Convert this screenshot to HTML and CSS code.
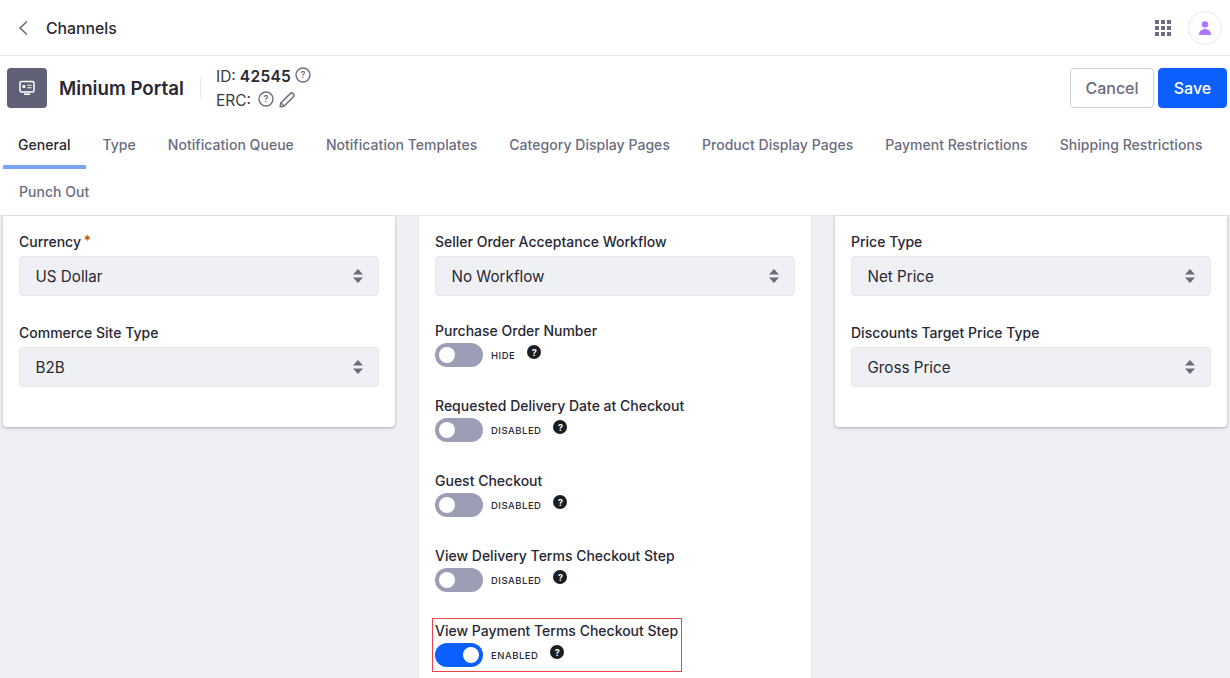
FILE: index.html
```html
<!DOCTYPE html>
<html lang="en">
<head>
<meta charset="utf-8">
<title>Channels</title>
<link rel="stylesheet" href="styles.css">
</head>
<body>
<header class="topbar">
  <svg class="back" width="12" height="16" viewBox="0 0 12 16"><path d="M10 1.5 3 8l7 6.5" fill="none" stroke="#6b6c7e" stroke-width="1.6"/></svg>
  <span class="topbar-title">Channels</span>
  <span class="spacer"></span>
  <svg class="apps" width="16" height="16" viewBox="0 0 16 16" fill="#6b6c7e">
    <rect x="0" y="0" width="4" height="4"/><rect x="6" y="0" width="4" height="4"/><rect x="12" y="0" width="4" height="4"/>
    <rect x="0" y="6" width="4" height="4"/><rect x="6" y="6" width="4" height="4"/><rect x="12" y="6" width="4" height="4"/>
    <rect x="0" y="12" width="4" height="4"/><rect x="6" y="12" width="4" height="4"/><rect x="12" y="12" width="4" height="4"/>
  </svg>
  <span class="avatar">
    <svg width="14" height="14" viewBox="0 0 14 14" fill="#af78ff"><circle cx="7" cy="3.4" r="3.2"/><path d="M1 14c0-3.8 2.4-6 6-6s6 2.2 6 6z"/></svg>
  </span>
</header>

<section class="entity">
  <span class="entity-icon">
    <svg width="16" height="16" viewBox="0 0 16 16"><rect x="1" y="1.6" width="14" height="10.4" rx="1.5" fill="none" stroke="#fff" stroke-width="1.5"/><rect x="3.4" y="5" width="3" height="3" rx="1" fill="#fff"/><path d="M8.4 5.2h4.2M8.4 7.8h4.2" stroke="#fff" stroke-width="1.1"/><rect x="5" y="13.4" width="6" height="1.6" fill="#fff"/></svg>
  </span>
  <h1 class="entity-name">Minium Portal</h1>
  <span class="divider"></span>
  <div class="entity-meta">
    <div class="meta-line"><span>ID:</span><b class="meta-id">42545</b>
      <svg class="help" width="16" height="16" viewBox="0 0 16 16"><circle cx="8" cy="8" r="7" fill="none" stroke="#6b6c7e" stroke-width="1.4"/><text x="8" y="11" text-anchor="middle" class="help-mark">?</text></svg>
    </div>
    <div class="meta-line"><span>ERC:</span>
      <svg class="help help-erc" width="16" height="16" viewBox="0 0 16 16"><circle cx="8" cy="8" r="7" fill="none" stroke="#6b6c7e" stroke-width="1.4"/><text x="8" y="11" text-anchor="middle" class="help-mark">?</text></svg>
      <svg class="pencil" width="16" height="16" viewBox="0 0 16 16"><path d="M1.2 14.8 1.8 11 11.5 1.4a1.6 1.6 0 0 1 2.2 0l.9.9a1.6 1.6 0 0 1 0 2.2L5 14.2z" fill="none" stroke="#6b6c7e" stroke-width="1.5" stroke-linejoin="round"/><path d="M2.2 11 5 13.8" stroke="#6b6c7e" stroke-width="1.2"/></svg>
    </div>
  </div>
  <span class="spacer"></span>
  <button class="btn btn-cancel">Cancel</button>
  <button class="btn btn-save">Save</button>
</section>

<nav class="tabs">
  <a class="tab tab-active">General</a>
  <a class="tab">Type</a>
  <a class="tab">Notification Queue</a>
  <a class="tab">Notification Templates</a>
  <a class="tab">Category Display Pages</a>
  <a class="tab">Product Display Pages</a>
  <a class="tab">Payment Restrictions</a>
  <a class="tab">Shipping Restrictions</a>
  <a class="tab">Punch Out</a>
</nav>

<main class="content">
  <section class="card card-short">
    <div class="field">
      <label class="label">Currency <span class="req">*</span></label>
      <div class="select">US Dollar<svg class="caret" width="10" height="14" viewBox="0 0 10 14" fill="#6b6c7e"><path d="M5 0 10 5.6H0zM5 14 0 8.4h10z"/></svg></div>
    </div>
    <div class="field">
      <label class="label">Commerce Site Type</label>
      <div class="select">B2B<svg class="caret" width="10" height="14" viewBox="0 0 10 14" fill="#6b6c7e"><path d="M5 0 10 5.6H0zM5 14 0 8.4h10z"/></svg></div>
    </div>
  </section>

  <section class="card card-tall">
    <div class="field">
      <label class="label">Seller Order Acceptance Workflow</label>
      <div class="select">No Workflow<svg class="caret" width="10" height="14" viewBox="0 0 10 14" fill="#6b6c7e"><path d="M5 0 10 5.6H0zM5 14 0 8.4h10z"/></svg></div>
    </div>
    <div class="toggle-field toggle-first">
      <div class="label">Purchase Order Number</div>
      <div class="toggle-row"><span class="switch"></span><span class="state">HIDE</span><span class="q">?</span></div>
    </div>
    <div class="toggle-field">
      <div class="label">Requested Delivery Date at Checkout</div>
      <div class="toggle-row"><span class="switch"></span><span class="state">DISABLED</span><span class="q">?</span></div>
    </div>
    <div class="toggle-field">
      <div class="label">Guest Checkout</div>
      <div class="toggle-row"><span class="switch"></span><span class="state">DISABLED</span><span class="q">?</span></div>
    </div>
    <div class="toggle-field">
      <div class="label">View Delivery Terms Checkout Step</div>
      <div class="toggle-row"><span class="switch"></span><span class="state">DISABLED</span><span class="q">?</span></div>
    </div>
    <div class="toggle-field toggle-marked">
      <span class="highlight"></span>
      <div class="label">View Payment Terms Checkout Step</div>
      <div class="toggle-row"><span class="switch switch-on"></span><span class="state">ENABLED</span><span class="q">?</span></div>
    </div>
  </section>

  <section class="card card-short">
    <div class="field">
      <label class="label">Price Type</label>
      <div class="select">Net Price<svg class="caret" width="10" height="14" viewBox="0 0 10 14" fill="#6b6c7e"><path d="M5 0 10 5.6H0zM5 14 0 8.4h10z"/></svg></div>
    </div>
    <div class="field">
      <label class="label">Discounts Target Price Type</label>
      <div class="select">Gross Price<svg class="caret" width="10" height="14" viewBox="0 0 10 14" fill="#6b6c7e"><path d="M5 0 10 5.6H0zM5 14 0 8.4h10z"/></svg></div>
    </div>
  </section>
</main>
</body>
</html>
```
FILE: styles.css
```css
* { box-sizing: border-box; }
html, body { margin: 0; height: 678px; overflow: hidden; }
body { font-family: Inter, "Liberation Sans", sans-serif; color: #272833; background: #fff; width: 1230px; }
.spacer { flex: 1; }

.topbar { height: 56px; display: flex; align-items: center; padding: 0 8px 0 17px; border-bottom: 1px solid #e7e7ed; }
.back { margin-right: 17px; }
.topbar-title { font-size: 15.8px; font-weight: 500; margin-top: 1px; }
.apps { margin-right: 17px; }
.avatar { width: 34px; height: 34px; border-radius: 50%; border: 1px solid #e7e7ed; display: flex; align-items: center; justify-content: center; }

.entity { height: 64px; display: flex; align-items: center; padding: 0 3px 0 7px; }
.entity-icon { width: 40px; height: 40px; border-radius: 4px; background: #5f6075; display: flex; align-items: center; justify-content: center; margin-right: 12px; }
.entity-name { font-size: 18.7px; font-weight: 600; margin: 1px 0 0; width: 141px; line-height: 24px; white-space: nowrap; }
.divider { width: 1px; height: 22px; background: #e7e7ed; margin-right: 15px; }
.entity-meta { font-size: 15.5px; color: #3a3b48; display: flex; flex-direction: column; }
.meta-line { display: flex; align-items: center; gap: 4px; height: 24px; }
.meta-id { font-weight: 600; color: #272833; letter-spacing: .3px; }
.help { margin-top: -2px; }
.help-erc { margin-left: 3px; }
.help-mark { font-size: 9px; font-weight: 600; fill: #6b6c7e; }
.pencil { margin-left: 1px; }
.btn { height: 40px; border-radius: 4px; font: 500 16px Inter, "Liberation Sans", sans-serif; padding: 0; }
.btn-cancel { width: 84px; background: #fff; border: 1px solid #cdced9; color: #6b6c7e; margin-right: 4px; }
.btn-save { width: 69px; background: #0b5fff; border: 1px solid #0b5fff; color: #fff; }

.tabs { height: 96px; display: flex; flex-wrap: wrap; align-content: flex-start; padding: 1px 4px 0 0; border-bottom: 1px solid #e7e7ed; box-shadow: 0 1px 1px rgba(39,40,51,.04); }
.tab { height: 47px; padding: 0 16px; display: flex; align-items: center; font-size: 14px; font-weight: 500; letter-spacing: .04px; color: #6b6c7e; white-space: nowrap; }
.tab:nth-child(1) { height: 48px; margin: 0 0 -1px 3px; padding: 3px 16px 0 15px; border-bottom: 4px solid #7ba6f7; color: #272833; }
.tab:nth-child(9) { margin-left: 3px; }

.content { height: 462px; background: #eff0f4; display: grid; grid-template-columns: repeat(3, 392px); gap: 24px; padding: 0 3px; align-items: start; }
.card { background: #fff; border-radius: 0 0 4px 4px; padding: 16px 16px 0; }
.card-short { height: 211px; box-shadow: 0 1px 3px rgba(39,40,51,.35); }
.card-tall { height: 470px; margin: 0 -1px; border: 1px solid #e7e7ed; border-top: 0; padding: 16px 16px 0; }
.field { margin-bottom: 27px; }
.label { display: block; font-size: 14px; font-weight: 500; line-height: 20px; color: #272833; margin-bottom: 4px; }
.req { color: #b95000; font-size: 14px; position: relative; top: -1px; margin-left: -1px; }
.select { height: 40px; background: #eff0f4; border: 1px solid #e7e7ed; border-radius: 4px; display: flex; align-items: center; justify-content: space-between; padding: 0 16px 0 15.5px; font-size: 15.2px; color: #272833; }
.caret { flex: none; margin-right: -1px; }

.toggle-field { position: relative; height: 75px; }
.toggle-first { margin-top: -2px; }
.toggle-field .label { margin-bottom: 0; height: 22px; }
.toggle-row { display: flex; align-items: center; height: 24px; }
.switch { width: 48px; height: 24px; border-radius: 12px; background: #9c9eb5; position: relative; flex: none; }
.switch::after { content: ""; position: absolute; left: 4px; top: 4px; width: 16px; height: 16px; border-radius: 50%; background: #fff; }
.switch-on { background: #0b5fff; }
.switch-on::after { left: 28px; }
.state { font-size: 9.5px; font-weight: 500; letter-spacing: .5px; margin-left: 8px; margin-top: 1px; color: #272833; }
.q { width: 14px; height: 14px; border-radius: 50%; background: #1c1c24; color: #fff; font-size: 9px; font-weight: 700; display: flex; align-items: center; justify-content: center; margin-left: 12px; margin-top: -6px; }
.highlight { position: absolute; left: -3px; top: -3px; width: 250px; height: 54px; border: 1px solid #f0414f; pointer-events: none; }
```
